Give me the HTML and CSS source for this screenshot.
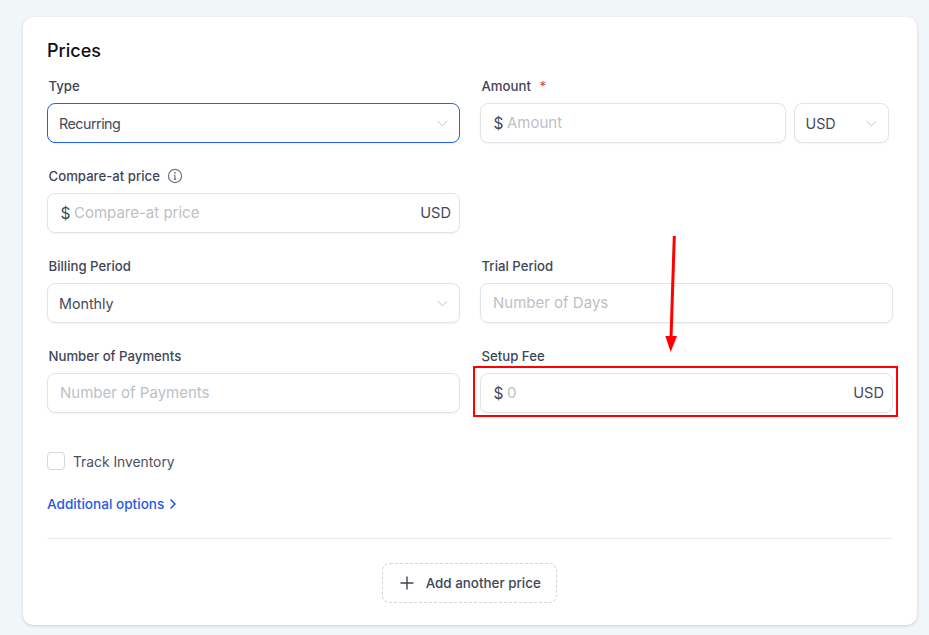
FILE: index.html
```html
<!DOCTYPE html>
<html lang="en">
<head>
<meta charset="utf-8">
<title>Prices</title>
<link rel="stylesheet" href="styles.css">
</head>
<body>
<main class="card">
  <h2 class="title">Prices</h2>
  <div class="grid">
    <div class="field">
      <div class="label">Type</div>
      <div class="control select focused"><span class="value tight">Recurring</span><svg class="chev" viewBox="0 0 12 12"><path d="M1 3.500 6 8.500 11 3.500"/></svg></div>
    </div>
    <div class="field">
      <div class="label">Amount <span class="req">*</span></div>
      <div class="pair">
        <div class="control grow"><span class="prefix">$</span><span class="ph">Amount</span></div>
        <div class="control select currency"><span class="value">USD</span><svg class="chev" viewBox="0 0 12 12"><path d="M1 3.500 6 8.500 11 3.500"/></svg></div>
      </div>
    </div>
    <div class="field">
      <div class="label">Compare-at price<svg class="info" viewBox="0 0 16 16"><circle cx="8" cy="8" r="6.600"/><path d="M8 7.400v4M6.800 7.400H8M6.800 11.400h2.400"/><circle class="dot" cx="7.900" cy="4.900" r=".9"/></svg></div>
      <div class="control"><span class="prefix">$</span><span class="ph">Compare-at price</span><span class="suffix">USD</span></div>
    </div>
    <div class="field"></div>
    <div class="field">
      <div class="label">Billing Period</div>
      <div class="control select"><span class="value">Monthly</span><svg class="chev" viewBox="0 0 12 12"><path d="M1 3.500 6 8.500 11 3.500"/></svg></div>
    </div>
    <div class="field">
      <div class="label">Trial Period</div>
      <div class="control"><span class="ph">Number of Days</span></div>
    </div>
    <div class="field">
      <div class="label">Number of Payments</div>
      <div class="control"><span class="ph">Number of Payments</span></div>
    </div>
    <div class="field">
      <div class="label">Setup Fee</div>
      <div class="control"><span class="prefix">$</span><span class="ph">0</span><span class="suffix">USD</span></div>
    </div>
  </div>
  <label class="check"><span class="box"></span><span class="check-text">Track Inventory</span></label>
  <a class="more">Additional options<svg class="more-icon" viewBox="0 0 8 12"><path d="M1.500 1.500 6 6 1.500 10.500"/></svg></a>
  <hr class="rule">
  <div class="actions">
    <button class="add"><svg class="plus" viewBox="0 0 14 14"><path d="M7 .5v13M.5 7h13"/></svg>Add another price</button>
  </div>
</main>
<div class="highlight"></div>
<svg class="arrow" viewBox="0 0 20 120"><path class="shaft" d="M10.300 0 7 102"/><path class="head" d="M1.300 100 13 100 6.700 116Z"/></svg>
</body>
</html>
```
FILE: styles.css
```css
* { box-sizing: border-box; }
html, body { margin: 0; height: 100%; }
body {
  background: #f1f6f9;
  font-family: Inter, "Noto Sans", sans-serif;
  padding: 17px 12px 0 23px;
  overflow: hidden;
  color: #2f3646;
}
.card {
  background: #fff;
  border-radius: 10px;
  height: 608px;
  padding: 24px 24px 0;
  box-shadow: 0 1px 3px rgba(60, 70, 90, .22);
}
.title {
  margin: 0;
  font-size: 18px;
  line-height: 20px;
  font-weight: 500;
  color: #0c0f18;
}
.grid {
  display: grid;
  grid-template-columns: 413px 413px;
  column-gap: 20px;
  grid-auto-rows: 90px;
  margin-top: 16px;
}
.label {
  display: flex;
  align-items: center;
  height: 18px;
  padding-left: 1.5px;
  margin-bottom: 8px;
  font-size: 13.2px;
  font-weight: 500;
  color: #3f4657;
  white-space: pre;
}
.req { color: #e5484d; margin-left: 5px; }
.info { width: 16px; height: 16px; margin-left: 7px; fill: none; stroke: #6b7385; stroke-width: 1.2; }
.info .dot { fill: #6b7385; stroke: none; }
.control {
  display: flex;
  align-items: center;
  height: 40px;
  padding: 0 8px 0 12px;
  background: #fff;
  border: 1px solid #e2e4ea;
  border-radius: 8px;
  font-size: 14.5px;
  box-shadow: 0 1px 2px rgba(40, 50, 70, .06);
}
.select { padding-left: 11px; padding-top: 1px; }
.focused { border-color: #2563eb; }
.value { color: #434a5b; flex: 1; font-size: 14.3px; }
.tight { letter-spacing: -.5px; }
.prefix { color: #434a5b; margin: 0 3.5px 0 .5px; font-size: 15.5px; }
.ph { color: #bcbfc5; font-size: 15px; flex: 1; padding-bottom: 1px; }
.suffix { color: #434a5b; font-size: 14.6px; }
.chev { width: 11px; height: 11px; margin-right: 3px; fill: none; stroke: #b9bcc4; stroke-width: 1; }
.pair { display: flex; gap: 8px; width: 409px; }
.grow { flex: 1; }
.select.currency { width: 95px; padding-left: 10.500px; }
.check {
  display: flex;
  align-items: center;
  gap: 8px;
  margin-top: 15px;
  height: 18px;
  font-size: 13.8px;
  color: #4a5163;
}
.check-text { padding-top: 2px; }
.box {
  width: 18px;
  height: 18px;
  border: 1px solid #d5d7df;
  border-radius: 4px;
}
.more {
  display: flex;
  align-items: center;
  margin-top: 25px;
  height: 18px;
  font-size: 13.6px;
  font-weight: 500;
  color: #2659e6;
}
.more-icon { width: 8px; height: 12px; margin-left: 5px; fill: none; stroke: #2659e6; stroke-width: 1.5; }
.rule {
  border: 0;
  border-top: 1px solid #e8eaee;
  margin: 25px 0 0;
}
.actions { display: flex; justify-content: center; margin-top: 24px; padding-right: 1px; }
.add {
  display: flex;
  align-items: center;
  gap: 12px;
  height: 40px;
  width: 175px;
  padding: 0 0 0 1.5px;
  justify-content: center;
  background: #fff;
  border: 1px dashed #d2d4da;
  border-radius: 8px;
  font: 500 13.4px Inter, sans-serif;
  color: #3f4657;
}
.plus { width: 14px; height: 14px; fill: none; stroke: #3f4657; stroke-width: 1.4; }
.highlight {
  position: absolute;
  left: 473px;
  top: 366px;
  width: 425px;
  height: 51px;
  border: 2px solid #f00;
}
.arrow {
  position: absolute;
  left: 664px;
  top: 236px;
  width: 20px;
  height: 120px;
}
.shaft { stroke: #f00; stroke-width: 3; fill: none; }
.head { fill: #f00; }
```
